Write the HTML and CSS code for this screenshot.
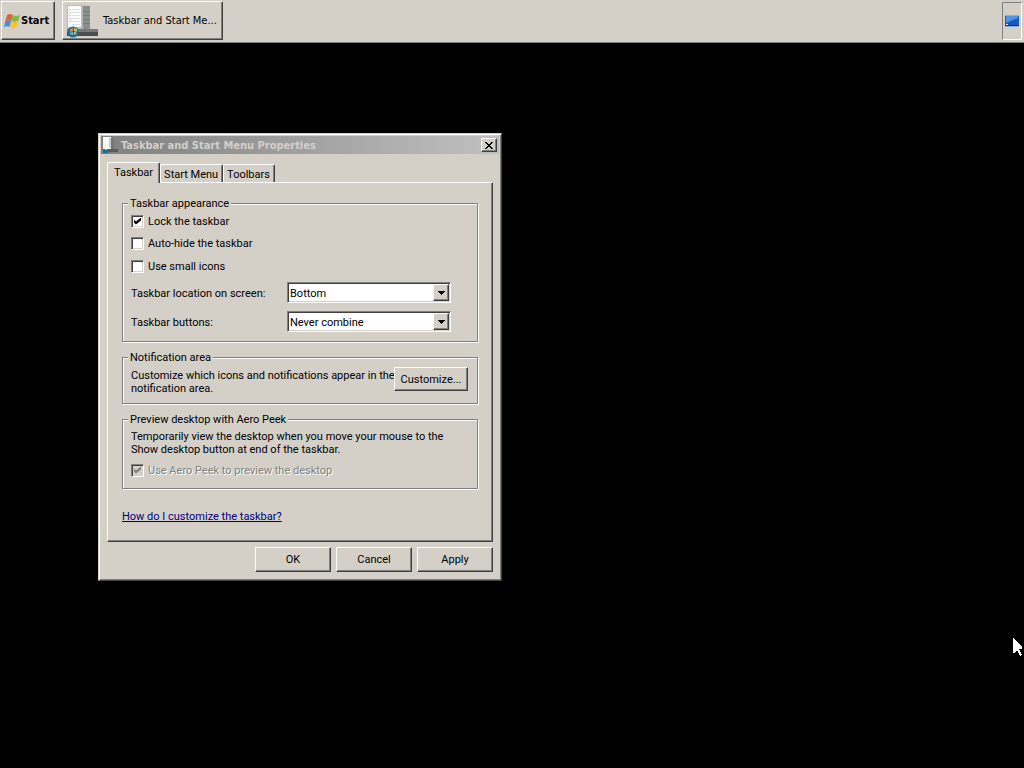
FILE: index.html
```html
<!DOCTYPE html>
<html lang="en">
<head>
<meta charset="utf-8">
<meta name="viewport" content="width=device-width, initial-scale=1">
<title>Taskbar and Start Menu Properties</title>
<link rel="stylesheet" href="styles.css">
</head>
<body>
<header class="taskbar">
  <button class="raised start" type="button">
    <svg class="flag" viewBox="0 0 16 16" aria-hidden="true">
      <path fill="#e06436" d="M3 2C5 .5 7 .8 8.800 2L7.200 8C5.400 7 3.400 7 1.200 8.200Z"/>
      <path fill="#86b84a" d="M8.800 2c2.200 1.300 4.700 1.300 7.200-.2L14.400 7.800c-2.400 1.500-5 1.500-7.200.2Z"/>
      <path fill="#4a8fd6" d="M1.200 8.200c2.200-1.200 4.200-1.200 6-.2L5.500 14C3.700 12.900 2 12.900 0 14.200Z"/>
      <path fill="#f2c53a" d="M7.200 8c2.200 1.300 4.800 1.300 7.200-.2l-1.600 6.400c-2.300 1.500-5 1.300-7.300-.2Z"/>
    </svg>
    <span>Start</span>
  </button>
  <button class="raised task" type="button">
    <svg class="task-icon" viewBox="0 0 34 34" aria-hidden="true">
      <path fill="#b4b7b8" d="M15 1l10 1v24H15z"/>
      <path fill="#8b8f90" d="M18 2h7v24h-7z"/>
      <path stroke="#74797a" d="M18 7.500h7M18 11.500h7M18 15.500h7M18 19.500h7"/>
      <path fill="#b8baba" d="M2 1h15v24H2z"/>
      <path fill="#fafafa" d="M3 2h13v21H3z"/>
      <path stroke="#e6c0bc" d="M4 5.500h2M4 8.500h2M4 11.500h2M4 14.500h2M4 17.500h2"/>
      <path stroke="#dde0e1" d="M7 5.500h8M7 8.500h8M7 11.500h8M7 14.500h8M7 17.500h8M7 20.500h8"/>
      <path fill="#77797a" d="M2 25h31v7H2z"/>
      <path fill="#4b4d4e" d="M2 28h31v4H2z"/>
      <circle cx="8" cy="28" r="5.500" fill="#246b91"/>
      <path fill="#e2844a" d="M5 25l3-1v3l-3 1z"/><path fill="#a9cc70" d="M9 24l3 1v3l-3-1z"/>
      <path fill="#70c2e5" d="M5 29l3-1v3l-3-1z"/><path fill="#e8d46b" d="M9 28l3 1-3 2z"/>
    </svg>
    <span>Taskbar and Start Me...</span>
  </button>
  <button class="show-desktop" type="button" aria-label="Show desktop">
    <svg viewBox="0 0 16 16" aria-hidden="true">
      <path fill="#8fb0d4" d="M1 2h14v12H1z"/><path fill="#1959b8" d="M1 3h14v9H1z"/>
      <path fill="#4f96e2" d="M2 3h12v2L2 10z"/><path fill="#17335c" d="M1 12h14v1H1z"/>
      <path fill="#e8f1fa" d="M2 11h2v1H2z"/>
    </svg>
  </button>
</header>

<main class="desktop">
  <form class="window" aria-labelledby="window-title">
    <div class="titlebar">
      <svg class="title-icon" viewBox="0 0 16 16" aria-hidden="true">
        <path fill="#737877" d="M8 1h4v12H8z"/><path fill="#f7f9f8" d="M1 0h8v12H1z"/>
        <path fill="#c6cccb" d="M7 1h2v10H7z"/><path fill="#565d5b" d="M2 12h14v3H2z"/>
        <path fill="#1d7191" d="M1 12h5v4H1z"/><path fill="#9ec568" d="M3 12h2v1H3z"/>
      </svg>
      <h1 class="title" id="window-title">Taskbar and Start Menu Properties</h1>
      <button class="close" type="button" aria-label="Close">
        <svg viewBox="0 0 8 7" shape-rendering="crispEdges" aria-hidden="true"><path d="M0 0h2v1h1v1h2V1h1V0h2v1H7v1H6v1H5v1h1v1h1v1h1v1H6V6H5V5H3v1H2v1H0V6h1V5h1V4h1V3H2V2H1V1H0z"/></svg>
      </button>
    </div>
    <div class="tabs" role="tablist">
      <button class="tab active" type="button" role="tab" aria-selected="true">Taskbar</button>
      <button class="tab" type="button" role="tab" aria-selected="false">Start Menu</button>
      <button class="tab" type="button" role="tab" aria-selected="false">Toolbars</button>
    </div>
    <section class="panel" role="tabpanel">
      <fieldset class="group appearance">
        <legend>Taskbar appearance</legend>
        <label class="check"><input type="checkbox" checked>Lock the taskbar</label>
        <label class="check"><input type="checkbox">Auto-hide the taskbar</label>
        <label class="check"><input type="checkbox">Use small icons</label>
        <div class="row">
          <label for="location">Taskbar location on screen:</label>
          <span class="combo"><select id="location"><option>Bottom</option><option>Top</option><option>Left</option><option>Right</option></select>
            <span class="arrow"><svg viewBox="0 0 7 4" shape-rendering="crispEdges" aria-hidden="true"><path d="M0 0h7v1H6v1H5v1H4v1H3V3H2V2H1V1H0z"/></svg></span></span>
        </div>
        <div class="row">
          <label for="buttons">Taskbar buttons:</label>
          <span class="combo"><select id="buttons"><option>Never combine</option><option>Always combine</option></select>
            <span class="arrow"><svg viewBox="0 0 7 4" shape-rendering="crispEdges" aria-hidden="true"><path d="M0 0h7v1H6v1H5v1H4v1H3V3H2V2H1V1H0z"/></svg></span></span>
        </div>
      </fieldset>
      <fieldset class="group notification">
        <legend>Notification area</legend>
        <div class="split">
          <p>Customize which icons and notifications appear in the<br>notification area.</p>
          <button class="raised command" type="button">Customize...</button>
        </div>
      </fieldset>
      <fieldset class="group peek">
        <legend>Preview desktop with Aero Peek</legend>
        <p>Temporarily view the desktop when you move your mouse to the<br>Show desktop button at end of the taskbar.</p>
        <label class="check off"><input type="checkbox" checked disabled>Use Aero Peek to preview the desktop</label>
      </fieldset>
      <a class="help" href="#help">How do I customize the taskbar?</a>
    </section>
    <div class="actions">
      <button class="raised command" type="button">OK</button>
      <button class="raised command" type="button">Cancel</button>
      <button class="raised command" type="button">Apply</button>
    </div>
  </form>
  <svg class="pointer" viewBox="0 0 12 20" shape-rendering="crispEdges" aria-hidden="true"><path fill="#fff" d="M1 1l9 9v2H7l3 6-2 1-3-6-3 3H1z"/></svg>
</main>
</body>
</html>
```
FILE: styles.css
```css
:root {
  --face: #d4d0c8;
  --shadow: #808080;
  --dark: #404040;
}
* { box-sizing: border-box; }
body {
  margin: 0;
  min-height: 100vh;
  display: flex;
  flex-direction: column;
  background: #000;
  color: #000;
  font: 11px/13px Roboto, "DejaVu Sans Condensed", sans-serif;
}
button, select, input { font: inherit; color: inherit; }
button { padding: 0; border: 0; background: var(--face); white-space: nowrap; }
svg { display: block; flex: none; }
p { margin: 0; white-space: nowrap; }

.raised {
  border: 1px solid;
  border-color: #fff var(--dark) var(--dark) #fff;
  box-shadow: inset -1px -1px var(--shadow);
}

.taskbar {
  display: flex;
  align-items: center;
  height: 43px;
  padding: 0 2px 1px 1px;
  background: var(--face);
  border-bottom: 1px solid var(--shadow);
}
.start {
  display: flex;
  align-items: center;
  gap: 1px;
  width: 54px;
  height: 39px;
  padding-left: 2px;
  font-family: "DejaVu Sans Condensed", sans-serif;
  font-weight: bold;
}
.flag { width: 16px; height: 16px; }
.task {
  display: flex;
  align-items: center;
  gap: 4px;
  width: 161px;
  height: 39px;
  margin-left: 7px;
  padding-left: 2px;
  font-family: "DejaVu Sans Condensed", sans-serif;
}
.task-icon { width: 34px; height: 34px; }
.show-desktop {
  display: grid;
  place-items: center;
  width: 20px;
  height: 38px;
  margin-left: auto;
  border: 1px solid;
  border-color: var(--shadow) #fff #fff var(--shadow);
}
.show-desktop svg { width: 16px; height: 16px; }

.desktop { position: relative; flex: 1; }
.window {
  position: absolute;
  left: 98px;
  top: 90px;
  width: 404px;
  padding: 1px;
  background: var(--face);
  border: 1px solid;
  border-color: var(--face) var(--dark) var(--dark) var(--face);
  box-shadow: inset 1px 1px #fff, inset -1px -1px var(--shadow);
}
.titlebar {
  display: flex;
  align-items: center;
  gap: 3px;
  height: 18px;
  margin: 1px;
  padding: 0 2px 0 1px;
  background: linear-gradient(to right, #808080, #c0c0c0);
}
.title-icon { width: 16px; height: 16px; }
.title {
  flex: 1;
  margin: 0;
  font: bold 11px/13px "DejaVu Sans Condensed", sans-serif;
  color: var(--face);
}
.close {
  display: grid;
  place-items: center;
  width: 16px;
  height: 14px;
  border: 1px solid;
  border-color: #fff var(--dark) var(--dark) #fff;
  box-shadow: inset -1px -1px var(--shadow);
}
.close svg { width: 8px; height: 7px; }

.tabs { display: flex; align-items: flex-end; height: 27px; padding-left: 7px; }
.tab {
  height: 18px;
  border: 1px solid;
  border-color: #fff var(--dark) transparent #fff;
  border-bottom: 0;
  border-radius: 2px 2px 0 0;
  box-shadow: inset -1px 0 var(--shadow);
  padding: 1px 4px 0 3px;
}
.tab.active {
  position: relative;
  height: 21px;
  margin-bottom: -1px;
  padding: 0 6px 1px;
}
.panel {
  display: flex;
  flex-direction: column;
  align-items: stretch;
  height: 360px;
  margin: 0 7px;
  padding: 14px 14px 0;
  border: 1px solid;
  border-color: #fff var(--dark) var(--dark) #fff;
  box-shadow: inset -1px -1px var(--shadow);
}
.group {
  min-width: 0;
  margin: 0;
  padding: 0 9px 0 8px;
  border: 1px solid var(--shadow);
  box-shadow: 1px 1px #fff, inset 1px 1px #fff;
}
.group legend { margin-left: -3px; padding: 0 2px; background: var(--face); }
.appearance { height: 145px; }
.notification { height: 53px; margin-top: 9px; }
.split { display: flex; align-items: flex-start; justify-content: space-between; }
.split p { flex: 1; min-width: 0; padding-top: 5px; }
.split .command { flex: none; width: 74px; height: 24px; margin-top: 3px; }
.peek { height: 76px; margin-top: 9px; }
.peek p { padding-top: 4px; }

.check { display: flex; align-items: center; gap: 4px; height: 23px; }
.appearance legend + .check { height: 22px; }
.check input {
  appearance: none;
  display: grid;
  place-items: center;
  width: 13px;
  height: 13px;
  margin: 0;
  background: #fff;
  border: 1px solid;
  border-color: var(--shadow) #fff #fff var(--shadow);
  box-shadow: inset 1px 1px var(--dark), inset -1px -1px var(--face);
}
.check input:checked::before {
  content: "";
  width: 7px;
  height: 7px;
  background: #000;
  clip-path: polygon(0 28%, 28% 57%, 100% 0, 100% 43%, 28% 100%, 0 72%);
}
.check.off { height: 28px; color: var(--shadow); text-shadow: 1px 1px #fff; }
.check.off input { background: var(--face); }
.check.off input:checked::before { background: var(--shadow); }

.row { display: flex; align-items: center; justify-content: space-between; height: 29px; }
.row label { padding-top: 2px; }
.combo { position: relative; width: 164px; margin-right: 17px; }
.combo select {
  appearance: none;
  display: block;
  width: 100%;
  height: 21px;
  margin: 0;
  padding: 1px 20px 0 2px;
  background: #fff;
  border: 1px solid;
  border-color: var(--shadow) #fff #fff var(--shadow);
  border-radius: 0;
  box-shadow: inset 1px 1px var(--dark), inset -1px -1px var(--face);
}
.arrow {
  position: absolute;
  top: 2px;
  right: 2px;
  display: grid;
  place-items: center;
  width: 16px;
  height: 17px;
  background: var(--face);
  border: 1px solid;
  border-color: #fff var(--dark) var(--dark) #fff;
  box-shadow: inset -1px -1px var(--shadow);
  pointer-events: none;
}
.arrow svg { width: 7px; height: 4px; }

.help { align-self: flex-start; margin-top: 21px; color: #000080; }
.command { width: 76px; height: 25px; }
.actions { display: flex; justify-content: flex-end; gap: 5px; padding: 5px 7px 7px; }
.pointer { position: absolute; right: 0; bottom: 111px; width: 12px; height: 20px; }
```
